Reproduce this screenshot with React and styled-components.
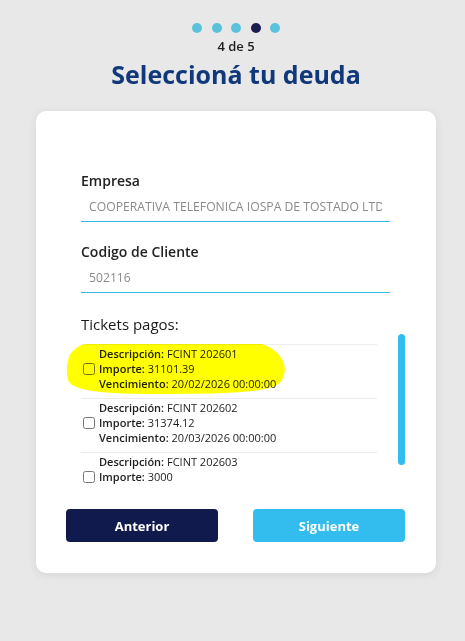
import React from "react";
import styled, { createGlobalStyle } from "styled-components";

const GlobalStyle = createGlobalStyle`
  html, body {
    margin: 0;
    padding: 0;
    background: #e8e8e8;
    font-family: "Open Sans", "Noto Sans", sans-serif;
  }
`;

const tickets = [
  { desc: "FCINT 202601", importe: "31101.39", venc: "20/02/2026 00:00:00" },
  { desc: "FCINT 202602", importe: "31374.12", venc: "20/03/2026 00:00:00" },
  { desc: "FCINT 202603", importe: "3000", venc: "20/04/2026 00:00:00" },
];

const Highlight = () => (
  <Marker width="240" height="70" viewBox="0 0 240 70">
    <path
      d="M21 10 L196 10 C214 16 224 31 216 46 C209 58 174 60 94 60 C44 60 6 58 2 46 C0 38 0 22 8 16 C12 12 16 10 21 10 Z"
      fill="#ffff00"
    />
  </Marker>
);

const App = () => {
  return (
    <Page>
      <GlobalStyle />
      <Steps>
        {[1, 2, 3, 4, 5].map((n) => (
          <Dot key={n} $active={n === 4} />
        ))}
      </Steps>
      <StepText>4 de 5</StepText>
      <Title>Seleccioná tu deuda</Title>
      <Card>
        <Field>
          <Label>Empresa</Label>
          <Input readOnly value="COOPERATIVA TELEFONICA IOSPA DE TOSTADO LTDA" />
        </Field>
        <Field>
          <Label>Codigo de Cliente</Label>
          <Input readOnly value="502116" />
        </Field>
        <ListTitle>Tickets pagos:</ListTitle>
        <TicketArea>
          <TicketScroll>
            <Highlight />
            {tickets.map((t) => (
              <Ticket key={t.desc}>
                <Check type="checkbox" />
                <TicketInfo>
                  <Line><b>Descripción:</b> {t.desc}</Line>
                  <Line><b>Importe:</b> {t.importe}</Line>
                  <Line><b>Vencimiento:</b> {t.venc}</Line>
                </TicketInfo>
              </Ticket>
            ))}
          </TicketScroll>
          <ScrollTrack>
            <ScrollThumb />
          </ScrollTrack>
        </TicketArea>
        <Actions>
          <Button $variant="dark">Anterior</Button>
          <Button>Siguiente</Button>
        </Actions>
      </Card>
    </Page>
  );
};

const Page = styled.div`
  min-height: 641px;
  display: flex;
  flex-direction: column;
  align-items: center;
  padding: 23px 0 0 7px;
  box-sizing: border-box;
`;

const Steps = styled.div`
  display: flex;
  gap: 9.5px;
`;

const Dot = styled.span`
  width: 10px;
  height: 10px;
  border-radius: 50%;
  background: ${(p) => (p.$active ? "#1b1d4f" : "#5bc2dc")};
`;

const StepText = styled.div`
  margin-top: 4px;
  font-size: 13px;
  line-height: 18px;
  font-weight: 600;
  color: #1e1e1e;
`;

const Title = styled.h1`
  margin: 2px 0 0;
  font-size: 25px;
  line-height: 34px;
  font-weight: 700;
  color: #10387a;
`;

const Card = styled.div`
  margin-top: 20px;
  width: 400px;
  box-sizing: border-box;
  padding: 60px 31px 31px 30px;
  background: #fff;
  border-radius: 10px;
  box-shadow: 0 2px 10px rgba(0, 0, 0, 0.08);
  display: flex;
  flex-direction: column;
`;

const Field = styled.div`
  margin: 0 15px 20px;
  display: flex;
  flex-direction: column;
`;

const Label = styled.label`
  font-size: 14px;
  line-height: 20px;
  font-weight: 600;
  color: #222;
`;

const Input = styled.input`
  border: none;
  border-bottom: 1px solid #35b8e8;
  height: 30px;
  padding: 0 8px;
  font-family: "Open Sans", sans-serif;
  font-size: 12.2px;
  color: #8a8a8a;
  outline: none;
  background: transparent;
`;

const ListTitle = styled.div`
  margin: 1px 15px 0;
  font-size: 15px;
  line-height: 20px;
  font-weight: 400;
  color: #1a1a1a;
`;

const TicketArea = styled.div`
  display: flex;
  height: 150px;
`;

const TicketScroll = styled.div`
  position: relative;
  flex: 1;
  padding: 10px 21px 0 15px;
  overflow: hidden;
`;

const ScrollTrack = styled.div`
  width: 7px;
  display: flex;
  flex-direction: column;
`;

const ScrollThumb = styled.div`
  height: 131px;
  border-radius: 4px;
  background: #33bdee;
`;

const Marker = styled.svg`
  position: absolute;
  left: 0;
  top: 0;
  mix-blend-mode: multiply;
  pointer-events: none;
`;

const Ticket = styled.label`
  display: flex;
  align-items: center;
  padding: 1px 0 7px;
  border-top: 1px solid #ececec;
`;

const Check = styled.input`
  width: 12px;
  height: 12px;
  margin: 0 4px 0 2px;
`;

const TicketInfo = styled.div`
  display: flex;
  flex-direction: column;
`;

const Line = styled.span`
  font-size: 11px;
  line-height: 15px;
  color: #1e1e1e;

  b {
    font-weight: 600;
  }
`;

const Actions = styled.div`
  margin-top: 25px;
  display: flex;
  justify-content: space-between;
`;

const Button = styled.button`
  width: 152px;
  height: 33px;
  border: none;
  border-radius: 4px;
  font-family: "Open Sans", sans-serif;
  font-size: 13px;
  font-weight: 700;
  color: #fff;
  background: ${(p) => (p.$variant === "dark" ? "#111a4c" : "#33bdee")};
  cursor: pointer;
`;

export default App;
